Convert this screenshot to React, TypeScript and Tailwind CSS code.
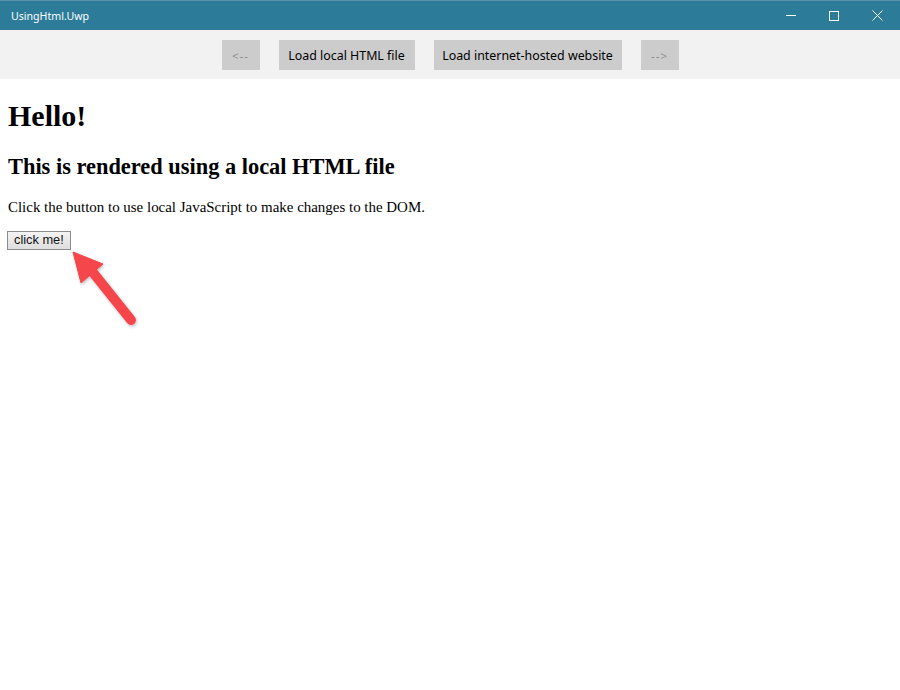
import React from 'react';

const uiFont = { fontFamily: '"Segoe UI", "Noto Sans", "Open Sans", sans-serif' };

function TitleBar() {
    return (
        <div className="h-[30px] bg-[#2c7b99] flex items-center shrink-0 border-t border-[#5a93a8]">
            <span className="pl-[11px] pt-[2px] text-[10.6px] text-white flex-1" style={uiFont}>UsingHtml.Uwp</span>
            <div className="flex h-full items-center pr-[1px]">
                <div className="w-[43px] h-full flex items-center justify-center">
                    <div className="w-[10px] h-px bg-white" />
                </div>
                <div className="w-[43px] h-full flex items-center justify-center">
                    <div className="w-[10px] h-[10px] border border-white" />
                </div>
                <div className="w-[44px] h-full flex items-center justify-center">
                    <svg width="11" height="11" viewBox="0 0 11 11">
                        <path d="M0.5 0.5 L10.5 10.5 M10.5 0.5 L0.5 10.5" stroke="white" strokeWidth="1" />
                    </svg>
                </div>
            </div>
        </div>
    );
}

function NavButton({ label, width, disabled }: { label: string; width: string; disabled?: boolean }) {
    return (
        <button
            className={`${width} h-[30px] bg-[#cccccc] flex items-center justify-center pt-[2px] ${disabled ? 'text-[#8c8c8c] text-[11.5px] tracking-[1px]' : 'text-black text-[12.4px]'}`}
            style={uiFont}
        >
            {label}
        </button>
    );
}

function Toolbar() {
    return (
        <div className="h-[49px] bg-[#f2f2f2] flex items-center justify-center gap-[19px] shrink-0 pt-[1px]">
            <NavButton label="<--" width="w-[38px]" disabled />
            <NavButton label="Load local HTML file" width="w-[136px]" />
            <NavButton label="Load internet-hosted website" width="w-[188px]" />
            <NavButton label="-->" width="w-[38px]" disabled />
        </div>
    );
}

function Arrow() {
    return (
        <svg className="absolute left-[60px] top-[240px]" width="90" height="100" viewBox="60 240 90 100">
            <defs>
                <filter id="sh" x="-20%" y="-20%" width="140%" height="140%">
                    <feDropShadow dx="1" dy="1.5" stdDeviation="1.5" floodColor="#000" floodOpacity="0.25" />
                </filter>
            </defs>
            <g filter="url(#sh)" fill="#f5464b" stroke="#f5464b">
                <line x1="91" y1="270" x2="131" y2="320" strokeWidth="10" strokeLinecap="round" />
                <polygon points="73,252 103,264 81,283" strokeWidth="1" strokeLinejoin="round" />
            </g>
        </svg>
    );
}

export default function App() {
    return (
        <div className="w-[900px] h-[690px] bg-white flex flex-col overflow-hidden relative">
            <TitleBar />
            <Toolbar />
            <div className="flex-1 px-[8px] text-black" style={{ fontFamily: '"Liberation Serif", "Times New Roman", serif' }}>
                <h1 className="text-[30px] font-bold leading-[34px] mt-[19.7px] mb-[21.5px]">Hello!</h1>
                <h2 className="text-[22.4px] font-bold leading-[26px] mb-[18.5px]">This is rendered using a local HTML file</h2>
                <p className="text-[14.95px] leading-[17px] mb-[11.5px]">Click the button to use local JavaScript to make changes to the DOM.</p>
                <button
                    className="ml-[-1px] h-[19px] px-[6px] border border-[#8b8b8b] bg-gradient-to-b from-[#f3f3f3] to-[#dedede] text-[12.8px] text-[#111] leading-none"
                    style={{ fontFamily: '"Liberation Sans", Arial, sans-serif' }}
                >
                    click me!
                </button>
            </div>
            <Arrow />
        </div>
    );
}
